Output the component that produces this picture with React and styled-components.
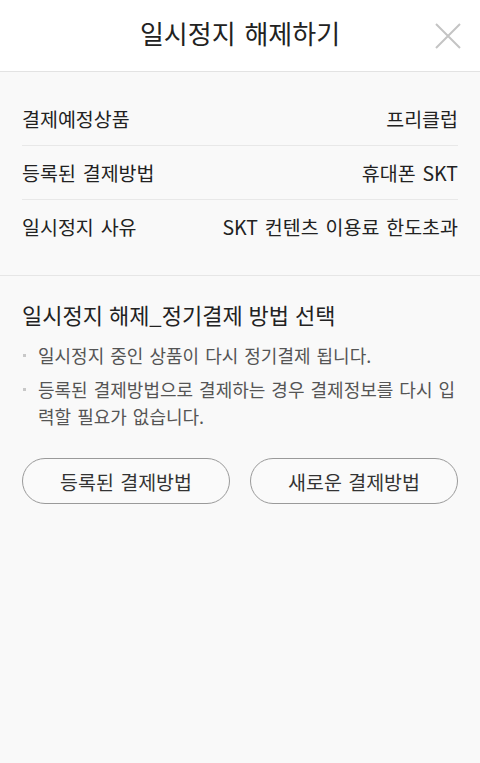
import React from 'react';
import styled, { createGlobalStyle } from 'styled-components';

const GlobalStyle = createGlobalStyle`
  html, body {
    margin: 0;
    padding: 0;
    background: #f9f9f9;
  }
  body {
    font-family: "Noto Sans CJK KR", "Noto Sans", sans-serif;
    color: #222;
  }
`;

const Page = styled.div`
  width: 480px;
  min-height: 763px;
  background: #f9f9f9;
`;

const Header = styled.header`
  position: relative;
  height: 72px;
  box-sizing: border-box;
  padding-bottom: 5px;
  background: #fff;
  border-bottom: 1px solid #e3e3e3;
  display: flex;
  align-items: center;
  justify-content: center;
`;

const Title = styled.h1`
  margin: 0;
  font-size: 26px;
  line-height: 36px;
  font-weight: 400;
  color: #222;
  word-spacing: 3px;
`;

const CloseButton = styled.button`
  position: absolute;
  right: 18px;
  top: 22px;
  width: 28px;
  height: 28px;
  padding: 0;
  border: 0;
  background: none;
  display: flex;
  align-items: center;
  justify-content: center;
`;

const InfoSection = styled.section`
  padding: 20px 22px 22px;
  border-bottom: 1px solid #e6e6e6;
`;

const InfoRow = styled.div`
  display: flex;
  justify-content: space-between;
  align-items: center;
  height: 53px;
  font-size: 19.5px;
  color: #222;
  word-spacing: 2.5px;
  & + & {
    border-top: 1px solid #e8e8e8;
  }
`;

const GuideSection = styled.section`
  padding: 22px 22px 0;
`;

const GuideTitle = styled.h2`
  margin: 0 0 12px;
  font-size: 22px;
  font-weight: 400;
  line-height: 32px;
  color: #222;
  word-spacing: 1px;
`;

const Notes = styled.ul`
  list-style: none;
  margin: 0;
  padding: 0;
`;

const Note = styled.li`
  position: relative;
  padding-left: 16px;
  font-size: 18px;
  line-height: 27px;
  color: #555;
  margin-bottom: 7px;
  word-spacing: 2px;
  &::before {
    content: '';
    position: absolute;
    left: 1px;
    top: 12px;
    width: 3px;
    height: 3px;
    background: #c8c8c8;
  }
`;

const Buttons = styled.div`
  display: grid;
  grid-template-columns: 1fr 1fr;
  gap: 20px;
  margin-top: 28px;
`;

const PillButton = styled.button`
  height: 46px;
  border: 1px solid #9a9a9a;
  border-radius: 23px;
  background: #fafafa;
  font-family: inherit;
  font-size: 19.5px;
  word-spacing: 2px;
  color: #333;
  padding: 0;
`;

const rows = [
  ['결제예정상품', '프리클럽'],
  ['등록된 결제방법', '휴대폰 SKT'],
  ['일시정지 사유', 'SKT 컨텐츠 이용료 한도초과'],
];

export default function App() {
  return (
    <Page>
      <GlobalStyle />
      <Header>
        <Title>일시정지 해제하기</Title>
        <CloseButton aria-label="닫기">
          <svg width="26" height="26" viewBox="0 0 26 26">
            <path d="M1 1 L25 25 M25 1 L1 25" stroke="#c4c4c4" strokeWidth="2" />
          </svg>
        </CloseButton>
      </Header>
      <InfoSection>
        {rows.map(([label, value]) => (
          <InfoRow key={label}>
            <span>{label}</span>
            <span>{value}</span>
          </InfoRow>
        ))}
      </InfoSection>
      <GuideSection>
        <GuideTitle>일시정지 해제_정기결제 방법 선택</GuideTitle>
        <Notes>
          <Note>일시정지 중인 상품이 다시 정기결제 됩니다.</Note>
          <Note>등록된 결제방법으로 결제하는 경우 결제정보를 다시 입력할 필요가 없습니다.</Note>
        </Notes>
        <Buttons>
          <PillButton>등록된 결제방법</PillButton>
          <PillButton>새로운 결제방법</PillButton>
        </Buttons>
      </GuideSection>
    </Page>
  );
}
